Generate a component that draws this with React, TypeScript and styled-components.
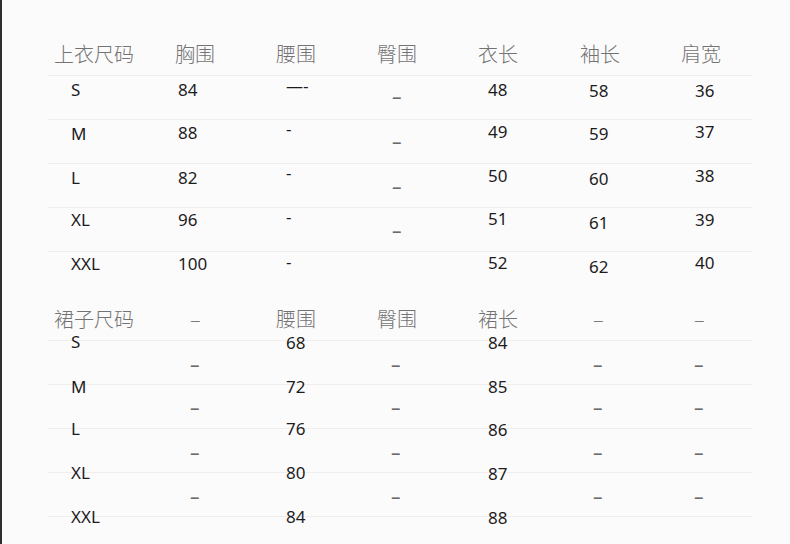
import React from 'react';
import styled, { createGlobalStyle } from 'styled-components';

type Cell = [string, number];

const GlobalStyle = createGlobalStyle`
  html, body {
    margin: 0;
    padding: 0;
    background: #fcfbfc;
  }
`;

const topHead = ['上衣尺码', '胸围', '腰围', '臀围', '衣长', '袖长', '肩宽'];
const topHeadIndent = [6, 0, 0, 0, 0, 1, 1];
const topIndent = [23, 3, 10, 15, 10, 10, 15];
const topRows: Cell[][] = [
  [['S', 4], ['84', 4], ['—-', 0], ['–', 11], ['48', 4], ['58', 5], ['36', 5]],
  [['M', 4], ['88', 3], ['-', -1], ['–', 12], ['49', 2], ['59', 4], ['37', 2]],
  [['L', 4], ['82', 4], ['-', -1], ['–', 13], ['50', 2], ['60', 5], ['38', 2]],
  [['XL', 2], ['96', 2], ['-', -1], ['–', 13], ['51', 1], ['61', 5], ['39', 2]],
  [['XXL', 2], ['100', 2], ['-', 0], ['', 0], ['52', 1], ['62', 5], ['40', 1]],
];

const skirtHead = ['裙子尺码', '–', '腰围', '臀围', '裙长', '–', '–'];
const skirtHeadIndent = [6, 15, 0, 0, 0, 14, 14];
const skirtIndent = [23, 15, 10, 14, 10, 14, 14];
const skirtRows: Cell[][] = [
  [['S', -9], ['–', 14], ['68', -8], ['–', 14], ['84', -8], ['–', 14], ['–', 14]],
  [['M', -8], ['–', 13], ['72', -8], ['–', 13], ['85', -8], ['–', 13], ['–', 13]],
  [['L', -10], ['–', 14], ['76', -10], ['–', 14], ['86', -9], ['–', 14], ['–', 14]],
  [['XL', -10], ['–', 14], ['80', -10], ['–', 14], ['87', -9], ['–', 14], ['–', 14]],
  [['XXL', -10], ['', 0], ['84', -10], ['', 0], ['88', -9], ['', 0], ['', 0]],
];

// the short grey dashes that stand for "no value"
const isGreyDash = (text: string) => text === '–';

const SizeChart = () => (
  <Page>
    <GlobalStyle />
    <Section>
      <HeadRow>
        {topHead.map((h, i) => (
          <HeadCell key={i} $indent={topHeadIndent[i]} $dash={isGreyDash(h)}>
            {h}
          </HeadCell>
        ))}
      </HeadRow>
      {topRows.map((row, r) => (
        <Row key={r}>
          {row.map(([text, dy], c) => (
            <DataCell key={c} $indent={topIndent[c]} $dy={dy} $dash={isGreyDash(text)}>
              {text}
            </DataCell>
          ))}
        </Row>
      ))}
    </Section>

    <Section $gap={1}>
      <HeadRow>
        {skirtHead.map((h, i) => (
          <HeadCell key={i} $indent={skirtHeadIndent[i]} $dash={isGreyDash(h)}>
            {h}
          </HeadCell>
        ))}
      </HeadRow>
      {skirtRows.map((row, r) => (
        <Row key={r}>
          {row.map(([text, dy], c) => (
            <DataCell key={c} $indent={skirtIndent[c]} $dy={dy} $dash={isGreyDash(text)}>
              {text}
            </DataCell>
          ))}
        </Row>
      ))}
    </Section>
  </Page>
);

const Page = styled.div`
  box-sizing: border-box;
  width: 790px;
  height: 544px;
  overflow: hidden;
  background: #fcfbfc;
  border-left: 2px solid #2e2e2e;
  padding: 31px 0 0 46px;
`;

const Section = styled.div<{ $gap?: number }>`
  display: flex;
  flex-direction: column;
  width: 704px;
  margin-top: ${p => p.$gap || 0}px;
`;

const Grid = styled.div`
  display: grid;
  grid-template-columns: 127px 101px 101px 101px 101px 101px 72px;
  height: 44px;
  align-items: start;
`;

const HeadRow = styled(Grid)``;

const Row = styled(Grid)`
  box-sizing: border-box;
  border-top: 1px solid #f0eeef;
`;

const HeadCell = styled.div<{ $indent: number; $dash: boolean }>`
  padding-left: ${p => p.$indent}px;
  margin-top: 12px;
  font-family: "Noto Sans CJK SC", "Noto Sans", sans-serif;
  font-size: 20px;
  line-height: 22px;
  font-weight: 300;
  color: ${p => (p.$dash ? '#7a7a7a' : '#737373')};
  white-space: nowrap;
`;

const DataCell = styled.div<{ $indent: number; $dy: number; $dash: boolean }>`
  padding-left: ${p => p.$indent}px;
  margin-top: ${p => p.$dy}px;
  font-family: "Noto Sans", "Open Sans", sans-serif;
  font-size: ${p => (p.$dash ? 19 : 17)}px;
  line-height: 20px;
  color: ${p => (p.$dash ? '#6a6a6a' : '#1c1c1c')};
  white-space: nowrap;
`;

export default function App() {
  return <SizeChart />;
}
